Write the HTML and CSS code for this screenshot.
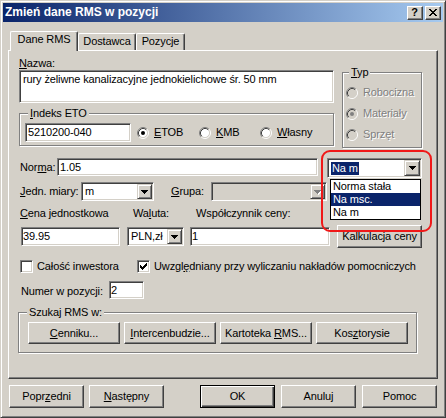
FILE: index.html
```html
<!DOCTYPE html>
<html lang="pl">
<head>
<meta charset="utf-8">
<title>Zmień dane RMS w pozycji</title>
<link rel="stylesheet" href="styles.css">
</head>
<body>
<svg class="sprite" width="0" height="0" aria-hidden="true">
  <defs>
    <symbol id="ring" viewBox="0 0 12 12">
      <circle cx="6" cy="6" r="4.5" fill="currentColor"/>
      <path d="M2.11 9.89A5.5 5.5 0 0 1 9.89 2.11" fill="none" stroke="#808080"/>
      <path d="M9.89 2.11A5.5 5.5 0 0 1 2.11 9.89" fill="none" stroke="#ffffff"/>
      <path d="M2.82 9.18A4.5 4.5 0 0 1 9.18 2.82" fill="none" stroke="#404040"/>
      <path d="M9.18 2.82A4.5 4.5 0 0 1 2.82 9.18" fill="none" stroke="#d4d0c8"/>
    </symbol>
    <symbol id="arrow" viewBox="0 0 7 4">
      <path d="M0 0h7v1H6v1H5v1H4v1H3V3H2V2H1V1H0z" fill="currentColor"/>
    </symbol>
  </defs>
</svg>
<div class="window">
  <div class="titlebar">
    <span class="title">Zmień dane RMS w pozycji</span>
    <div class="tb-buttons">
      <span class="tb-btn help">?</span>
      <span class="tb-btn"><svg class="close-glyph" width="8" height="7" viewBox="0 0 8 7"><path d="M0 0h2v1H0zM6 0h2v1H6zM1 1h2v1H1zM5 1h2v1H5zM2 2h4v1H2zM3 3h2v1H3zM2 4h4v1H2zM1 5h2v1H1zM5 5h2v1H5zM0 6h2v1H0zM6 6h2v1H6z"/></svg></span>
    </div>
  </div>
  <div class="client">
    <div class="tabs">
      <div class="tab tab-active tab-dane">Dane RMS</div>
      <div class="tab tab-dost">Dostawca</div>
      <div class="tab tab-poz">Pozycje</div>
    </div>
    <div class="panel">
      <div class="top">
        <div class="left-col">
          <div class="lbl"><u>N</u>azwa:</div>
          <div class="edit textarea">rury żeliwne kanalizacyjne jednokielichowe śr. 50 mm</div>
          <div class="group eto">
            <div class="group-title"><u>I</u>ndeks ETO</div>
            <div class="eto-row">
              <div class="edit eto-input">5210200-040</div>
              <div class="opt opt-etob">
                <svg class="radio" width="12" height="12" viewBox="0 0 12 12"><use href="#ring"/><circle cx="6" cy="6" r="2" fill="#000"/></svg>
                <span><u>E</u>TOB</span>
              </div>
              <div class="opt opt-kmb">
                <svg class="radio" width="12" height="12" viewBox="0 0 12 12"><use href="#ring"/></svg>
                <span><u>K</u>MB</span>
              </div>
              <div class="opt">
                <svg class="radio" width="12" height="12" viewBox="0 0 12 12"><use href="#ring"/></svg>
                <span><u>W</u>łasny</span>
              </div>
            </div>
          </div>
        </div>
        <div class="group typ">
          <div class="group-title typ-title"><u>T</u>yp</div>
          <div class="typ-list">
            <div class="opt typ-row">
              <svg class="radio radio-dis" width="12" height="12" viewBox="0 0 12 12"><use href="#ring"/></svg>
              <span class="dis">Robocizna</span>
            </div>
            <div class="opt typ-row">
              <svg class="radio radio-dis" width="12" height="12" viewBox="0 0 12 12"><use href="#ring"/><circle cx="6" cy="6" r="2" fill="#808080"/></svg>
              <span class="dis">Materiały</span>
            </div>
            <div class="opt typ-row">
              <svg class="radio radio-dis" width="12" height="12" viewBox="0 0 12 12"><use href="#ring"/></svg>
              <span class="dis">Sprzęt</span>
            </div>
          </div>
        </div>
      </div>

      <div class="row norma-row">
        <div class="lbl lbl-norma">Nor<u>m</u>a:</div>
        <div class="edit norma-input">1.05</div>
        <div class="combo combo-norma">
          <div class="val"><span class="sel">Na m</span></div>
          <div class="cbtn cbtn-lg"><svg width="7" height="4"><use href="#arrow"/></svg></div>
          <div class="dropdown">
            <div class="dd-item">Norma stała</div>
            <div class="dd-item hl">Na msc.</div>
            <div class="dd-item">Na m</div>
          </div>
          <div class="annot"></div>
        </div>
      </div>

      <div class="row jedn-row">
        <div class="lbl lbl-jedn"><u>J</u>edn. miary:</div>
        <div class="combo combo-jedn">
          <div class="val">m</div>
          <div class="cbtn"><svg width="7" height="4"><use href="#arrow"/></svg></div>
        </div>
        <div class="lbl lbl-grupa"><u>G</u>rupa:</div>
        <div class="combo combo-grupa combo-dis">
          <div class="val"></div>
          <div class="cbtn cbtn-dis"><svg width="7" height="4"><use href="#arrow"/></svg></div>
        </div>
      </div>

      <div class="row labels-row">
        <div class="lbl lbl-cena"><u>C</u>ena jednostkowa</div>
        <div class="lbl lbl-waluta">Wa<u>l</u>uta:</div>
        <div class="lbl">Współczynnik ceny:</div>
      </div>

      <div class="row inputs-row">
        <div class="edit cena-input">39.95</div>
        <div class="combo combo-waluta">
          <div class="val">PLN,zł</div>
          <div class="cbtn"><svg width="7" height="4"><use href="#arrow"/></svg></div>
        </div>
        <div class="edit wsp-input">1</div>
        <div class="btn btn-kalk">Kalkulacja ceny</div>
      </div>

      <div class="row check-row">
        <div class="cb cb-first"></div>
        <div class="cb-label cb-label-first">Całość inwestora</div>
        <div class="cb"><svg width="7" height="7" viewBox="0 0 7 7"><path d="M6 0h1v1H6zM5 1h2v1H5zM0 2h1v1H0zM4 2h3v1H4zM0 3h2v1H0zM3 3h3v1H3zM0 4h5v1H0zM1 5h3v1H1zM2 6h1v1H2z"/></svg></div>
        <div class="cb-label">Uwzgl<u>ę</u>dniany przy wyliczaniu nakładów pomocniczych</div>
      </div>

      <div class="row numer-row">
        <div class="lbl lbl-numer">Numer w pozycji:</div>
        <div class="edit numer-input">2</div>
      </div>

      <div class="group szukaj">
        <div class="group-title">Szukaj RMS w:</div>
        <div class="szukaj-buttons">
          <div class="btn btn-s"><span><u>C</u>enniku...</span></div>
          <div class="btn btn-s"><span><u>I</u>ntercenbudzie...</span></div>
          <div class="btn btn-s"><span>Kartoteka <u>R</u>MS...</span></div>
          <div class="btn btn-s"><span>Kos<u>z</u>torysie</span></div>
        </div>
      </div>
    </div>

    <div class="footer">
      <div class="btn btn-f btn-poprz"><span>Popr<u>z</u>edni</span></div>
      <div class="btn btn-f btn-nast"><span><u>N</u>astępny</span></div>
      <div class="btn btn-f btn-ok btn-default">OK</div>
      <div class="btn btn-f btn-gap">Anuluj</div>
      <div class="btn btn-f btn-gap">Pomoc</div>
    </div>
  </div>
</div>
</body>
</html>
```
FILE: styles.css
```css
* { box-sizing: border-box; }
html, body { margin: 0; padding: 0; }
body {
  background: #d4d0c8;
  font-family: "Liberation Sans", Arial, sans-serif;
  font-size: 11px;
  line-height: 13px;
  letter-spacing: -0.12px;
  color: #000;
}
u { text-decoration: underline; text-underline-offset: 1px; }
.sprite { display: block; width: 0; height: 0; overflow: hidden; }

.window {
  position: relative;
  width: 446px;
  height: 418px;
  border: 1px solid;
  border-color: #d4d0c8 #404040 #404040 #d4d0c8;
  box-shadow: inset 1px 1px #fff, inset -1px -1px #808080;
  padding: 2px;
  background: #d4d0c8;
}

/* title bar */
.titlebar {
  height: 19px;
  display: flex;
  align-items: center;
  justify-content: space-between;
  padding: 0 2px;
  background: linear-gradient(90deg, #0a246a, #a6caf0);
}
.title { color: #fff; font-weight: bold; font-size: 12px; letter-spacing: 0; }
.tb-buttons { display: flex; gap: 2px; }
.tb-btn {
  width: 16px;
  height: 14px;
  background: #d4d0c8;
  border: 1px solid;
  border-color: #fff #404040 #404040 #fff;
  box-shadow: inset -1px -1px #808080;
  display: flex;
  align-items: center;
  justify-content: center;
}
.help { font-weight: bold; font-size: 11px; line-height: 11px; padding-right: 1px; }
.close-glyph { display: block; fill: #000; margin-right: 1px; }

/* tabs */
.client { padding-top: 9px; }
.tabs {
  display: flex;
  align-items: flex-end;
  height: 19px;
  margin-left: 7px;
  position: relative;
  z-index: 2;
}
.tab {
  height: 17px;
  border: 1px solid;
  border-bottom: 0;
  border-color: #fff #404040 #404040 #fff;
  box-shadow: inset -1px 0 #808080;
  border-radius: 2px 2px 0 0;
  background: #d4d0c8;
  text-align: center;
  padding-top: 1px;
}
.tab-active { height: 20px; margin-bottom: -1px; }
.tab-dane { width: 68px; }
.tab-dost { width: 58px; }
.tab-poz { width: 49px; }

.panel {
  margin-left: 5px;
  width: 430px;
  height: 329px;
  border: 1px solid;
  border-color: #fff #404040 #404040 #fff;
  box-shadow: inset -1px -1px #808080;
}

/* common controls */
.edit {
  background: #fff;
  border: 1px solid;
  border-color: #808080 #fff #fff #808080;
  box-shadow: inset 1px 1px #404040, inset -1px -1px #d4d0c8;
  padding: 1px 2px;
  display: flex;
  align-items: center;
  white-space: nowrap;
}
.group {
  border: 1px solid #808080;
  box-shadow: inset 1px 1px #fff, 1px 1px #fff;
}
.group-title {
  width: max-content;
  margin: -7px 0 0 8px;
  padding: 0 2px;
  background: #d4d0c8;
}
.btn {
  background: #d4d0c8;
  border: 1px solid;
  border-color: #fff #404040 #404040 #fff;
  box-shadow: inset -1px -1px #808080;
  display: flex;
  align-items: center;
  justify-content: center;
  white-space: nowrap;
}
.btn-default {
  border-color: #000;
  box-shadow: inset 1px 1px #fff, inset -1px -1px #404040, inset -2px -2px #808080;
}
.dis { color: #808080; text-shadow: 1px 1px 0 #fff; }
.opt { display: flex; align-items: center; }
.radio { display: block; flex: none; margin-right: 5px; color: #fff; }
.radio-dis { color: #d4d0c8; }

.combo {
  display: flex;
  background: #fff;
  border: 1px solid;
  border-color: #808080 #fff #fff #808080;
  box-shadow: inset 1px 1px #404040, inset -1px -1px #d4d0c8;
  padding: 1px;
}
.combo .val { flex: 1; display: flex; align-items: center; padding-left: 2px; white-space: nowrap; }
.cbtn {
  flex: none;
  width: 15px;
  background: #d4d0c8;
  border: 1px solid;
  border-color: #d4d0c8 #404040 #404040 #d4d0c8;
  box-shadow: inset 1px 1px #fff, inset -1px -1px #808080;
  display: flex;
  align-items: center;
  justify-content: center;
  color: #000;
}
.cbtn svg { display: block; }
.cbtn-lg { width: 16px; }
.combo-dis { background: #d4d0c8; }
.cbtn-dis { color: #808080; }
.cbtn-dis svg { filter: drop-shadow(1px 1px 0 #fff); }
.sel { background: #0a246a; color: #fff; padding: 0 1px; }

/* layout */
.row { display: flex; align-items: flex-start; }
.top { display: flex; align-items: flex-start; }
.left-col { margin: 6px 0 0 10px; width: 315px; }
.lbl { white-space: nowrap; flex: none; }
.textarea { height: 33px; align-items: flex-start; padding: 2px 3px; }
.eto { margin-top: 10px; height: 33px; }
.eto-row { display: flex; align-items: center; margin: 3px 0 0 5px; }
.eto-input { width: 106px; height: 19px; }
.opt-etob { margin-left: 6px; width: 62px; }
.opt-kmb { width: 61px; }

.typ { margin: 21px 0 0 8px; width: 80px; height: 76px; }
.typ-title { margin-left: 6px; }
.typ-list { margin-top: 3px; padding-left: 3px; }
.typ-row { height: 21px; }

.norma-row { margin-top: 10px; height: 20px; }
.lbl-norma { margin: 3px 0 0 11px; width: 37px; }
.norma-input { width: 261px; height: 18px; }
.combo-norma { position: relative; margin-left: 9px; width: 95px; height: 20px; }
.dropdown {
  position: absolute;
  left: 2px;
  top: 20px;
  width: 91px;
  border: 1px solid #000;
  background: #fff;
  z-index: 3;
}
.dd-item { height: 13px; padding-left: 2px; white-space: nowrap; }
.dd-item.hl { background: #0a246a; color: #fff; }
.annot {
  position: absolute;
  left: -7px;
  top: -9px;
  width: 111px;
  height: 82px;
  border: 2px solid #f01818;
  border-radius: 9px;
  z-index: 4;
}

.jedn-row { margin-top: 4px; height: 19px; }
.lbl-jedn { margin: 3px 0 0 11px; width: 61px; }
.combo-jedn { width: 73px; height: 19px; }
.lbl-grupa { margin: 3px 0 0 17px; width: 40px; }
.combo-grupa { width: 116px; height: 19px; }

.labels-row { margin-top: 6px; height: 13px; }
.lbl-cena { margin-left: 11px; width: 113px; }
.lbl-waluta { width: 63px; }

.inputs-row { margin-top: 5px; height: 23px; }
.cena-input { margin: 2px 0 0 12px; width: 99px; height: 19px; padding-left: 1px; }
.combo-waluta { margin: 2px 0 0 7px; width: 57px; height: 19px; }
.wsp-input { margin: 2px 0 0 6px; width: 140px; height: 19px; padding-left: 1px; }
.btn-kalk { margin-left: 7px; width: 85px; height: 23px; }

.check-row { margin-top: 12px; height: 13px; align-items: center; }
.cb {
  flex: none;
  width: 13px;
  height: 13px;
  background: #fff;
  border: 1px solid;
  border-color: #808080 #fff #fff #808080;
  box-shadow: inset 1px 1px #404040, inset -1px -1px #d4d0c8;
  display: flex;
  align-items: center;
  justify-content: center;
}
.cb svg { display: block; fill: #000; }
.cb-first { margin-left: 11px; }
.cb-label { margin-left: 4px; white-space: nowrap; }
.cb-label-first { width: 100px; }

.numer-row { margin-top: 8px; height: 18px; }
.lbl-numer { margin: 4px 0 0 12px; width: 88px; }
.numer-input { width: 35px; height: 18px; padding-left: 1px; }

.szukaj { margin: 13px 0 0 9px; width: 399px; height: 41px; }
.szukaj-buttons { display: flex; gap: 4px; margin: 3px 0 0 9px; }
.btn-s { width: 92px; height: 22px; }

.footer { display: flex; margin-top: 6px; }
.btn-f { width: 75px; height: 23px; }
.btn-poprz { margin-left: 6px; }
.btn-nast { margin-left: 5px; }
.btn-ok { margin-left: 36px; }
.btn-gap { margin-left: 6px; }
```
